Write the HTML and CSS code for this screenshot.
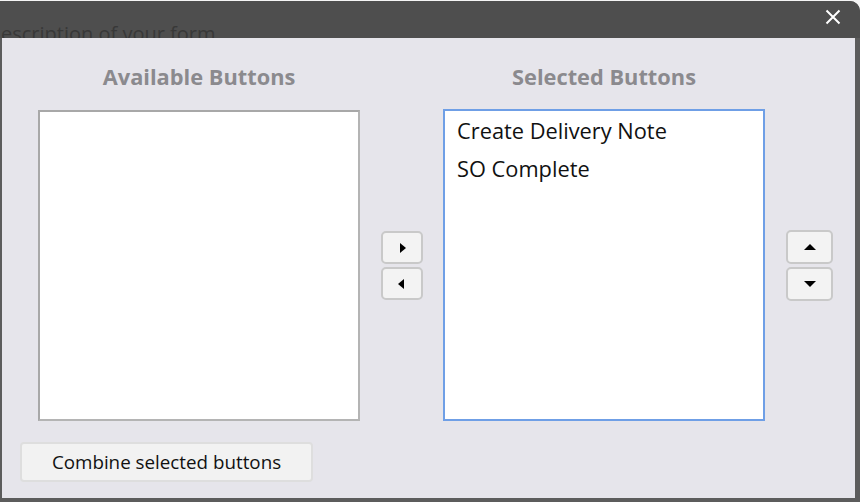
FILE: index.html
```html
<!DOCTYPE html>
<html lang="en">
<head>
    <meta charset="UTF-8">
    <title>Form Buttons</title>
    <link rel="stylesheet" href="styles.css">
</head>
<body>
    <div class="dialog">
        <div class="title-bar">
            <span class="behind-text">escription of your form</span>
            <button class="close-button" aria-label="Close">
                <svg width="16" height="16" viewBox="0 0 16 16">
                    <path d="M1.5 1.5 L14.5 14.5 M14.5 1.5 L1.5 14.5" stroke="#ffffff" stroke-width="2" fill="none"/>
                </svg>
            </button>
        </div>
        <div class="dialog-body">
            <div class="lists">
                <div class="column">
                    <div class="heading">Available Buttons</div>
                    <div class="listbox"></div>
                </div>
                <div class="movers">
                    <button class="arrow-button"><span class="tri tri-right"></span></button>
                    <button class="arrow-button"><span class="tri tri-left"></span></button>
                </div>
                <div class="column">
                    <div class="heading">Selected Buttons</div>
                    <div class="listbox selected">
                        <div class="item">Create Delivery Note</div>
                        <div class="item">SO Complete</div>
                    </div>
                </div>
                <div class="sorters">
                    <button class="arrow-button wide"><span class="tri tri-up"></span></button>
                    <button class="arrow-button wide"><span class="tri tri-down"></span></button>
                </div>
            </div>
            <div class="footer">
                <button class="combine-button">Combine selected buttons</button>
            </div>
        </div>
    </div>
</body>
</html>
```

FILE: styles.css
```css
body {
    margin: 0;
    background-color: #f4f4f4;
    font-family: 'Open Sans', sans-serif;
    overflow: hidden;
}

.dialog {
    margin-top: 1px;
    width: 860px;
    height: 501px;
    box-sizing: border-box;
    background-color: #5c5c5c;
    border-top-right-radius: 10px;
    display: flex;
    flex-direction: column;
}

.title-bar {
    height: 37px;
    flex-shrink: 0;
    background-color: #4e4e4e;
    border-top-right-radius: 10px;
    position: relative;
    overflow: hidden;
}

.behind-text {
    position: absolute;
    left: 1px;
    top: 19px;
    font-size: 20px;
    line-height: 27px;
    color: #383838;
    white-space: nowrap;
}

.close-button {
    position: absolute;
    top: 8px;
    right: 19px;
    width: 16px;
    height: 16px;
    padding: 0;
    border: none;
    background: none;
    cursor: pointer;
}

.close-button svg {
    display: block;
}

.dialog-body {
    flex: 1;
    margin: 0 5px 4px 2px;
    background-color: #e6e5eb;
    padding-top: 25px;
}

.lists {
    display: flex;
    padding-left: 36px;
}

.column {
    width: 322px;
}

.heading {
    text-align: center;
    font-size: 21.8px;
    font-weight: bold;
    line-height: 27px;
    color: #8b8a8e;
    margin-bottom: 20px;
}

.listbox {
    height: 311px;
    box-sizing: border-box;
    background-color: #ffffff;
    border: 2px solid #b4b4b4;
    border-top-color: #a8a8a8;
    border-left-color: #a8a8a8;
}

.listbox.selected {
    border-color: #6f9fe6;
    margin-top: -1px;
    height: 312px;
}

.item {
    font-size: 21.8px;
    line-height: 38px;
    padding-left: 12px;
    color: #111111;
}

.item:first-child {
    margin-top: 1px;
}

.movers,
.sorters {
    display: flex;
    flex-direction: column;
    justify-content: center;
    align-items: center;
    gap: 3px;
    padding-top: 47px;
}

.movers {
    width: 83px;
}

.sorters {
    width: 88px;
    align-items: flex-start;
    padding-left: 21px;
    box-sizing: border-box;
}

.arrow-button {
    width: 42px;
    height: 33px;
    box-sizing: border-box;
    background-color: #f3f3f3;
    border: 2px solid #c9c9c9;
    border-radius: 5px;
    padding: 0;
    display: flex;
    justify-content: center;
    align-items: center;
    cursor: pointer;
}

.arrow-button.wide {
    width: 47px;
    height: 34px;
}

.tri {
    width: 0;
    height: 0;
}

.tri-right {
    border-top: 5px solid transparent;
    border-bottom: 5px solid transparent;
    border-left: 6px solid #000000;
    margin-left: 2px;
}

.tri-left {
    border-top: 5px solid transparent;
    border-bottom: 5px solid transparent;
    border-right: 6px solid #000000;
    margin-right: 2px;
}

.tri-up {
    border-left: 6px solid transparent;
    border-right: 6px solid transparent;
    border-bottom: 6px solid #000000;
}

.tri-down {
    border-left: 6px solid transparent;
    border-right: 6px solid transparent;
    border-top: 6px solid #000000;
}

.footer {
    padding: 21px 0 0 18px;
}

.combine-button {
    width: 293px;
    height: 40px;
    background-color: #f2f2f2;
    border: 2px solid #dedede;
    border-radius: 4px;
    font-family: 'Open Sans', sans-serif;
    font-size: 18.8px;
    color: #111111;
    cursor: pointer;
}
```
